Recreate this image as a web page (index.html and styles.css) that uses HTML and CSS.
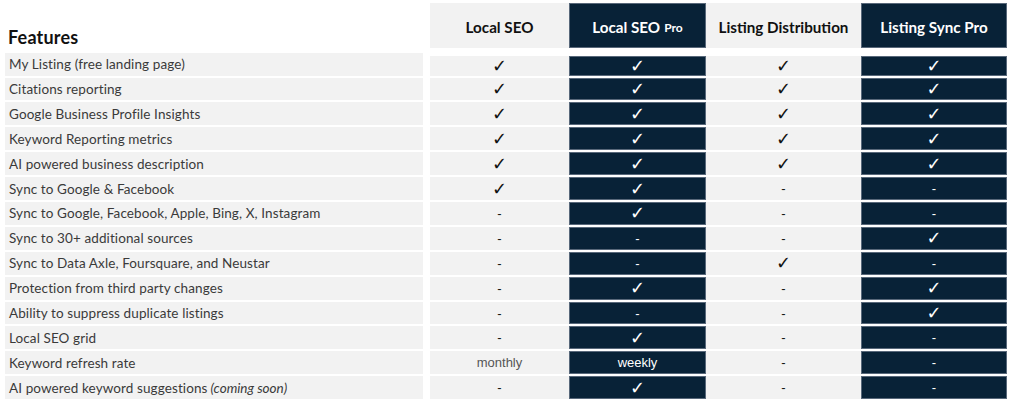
FILE: index.html
```html
<!DOCTYPE html>
<html lang="en">
<head>
<meta charset="utf-8">
<title>Features comparison</title>
<link rel="stylesheet" href="styles.css">
</head>
<body>
<div class="table">
  <div class="cell feat-head">Features</div>
  <div class="cell head light">Local SEO</div>
  <div class="cell head dark">Local SEO <small>Pro</small></div>
  <div class="cell head light">Listing Distribution</div>
  <div class="cell head dark">Listing Sync Pro</div>

  <div class="cell feat">My Listing (free landing page)</div>
  <div class="cell val light first"><span class="ck">✓</span></div>
  <div class="cell val dark first"><span class="ck">✓</span></div>
  <div class="cell val light first"><span class="ck">✓</span></div>
  <div class="cell val dark first"><span class="ck">✓</span></div>

  <div class="cell feat">Citations reporting</div>
  <div class="cell val light"><span class="ck">✓</span></div>
  <div class="cell val dark"><span class="ck">✓</span></div>
  <div class="cell val light"><span class="ck">✓</span></div>
  <div class="cell val dark"><span class="ck">✓</span></div>

  <div class="cell feat">Google Business Profile Insights</div>
  <div class="cell val light"><span class="ck">✓</span></div>
  <div class="cell val dark"><span class="ck">✓</span></div>
  <div class="cell val light"><span class="ck">✓</span></div>
  <div class="cell val dark"><span class="ck">✓</span></div>

  <div class="cell feat">Keyword Reporting metrics</div>
  <div class="cell val light"><span class="ck">✓</span></div>
  <div class="cell val dark"><span class="ck">✓</span></div>
  <div class="cell val light"><span class="ck">✓</span></div>
  <div class="cell val dark"><span class="ck">✓</span></div>

  <div class="cell feat">AI powered business description</div>
  <div class="cell val light"><span class="ck">✓</span></div>
  <div class="cell val dark"><span class="ck">✓</span></div>
  <div class="cell val light"><span class="ck">✓</span></div>
  <div class="cell val dark"><span class="ck">✓</span></div>

  <div class="cell feat">Sync to Google &amp; Facebook</div>
  <div class="cell val light"><span class="ck">✓</span></div>
  <div class="cell val dark"><span class="ck">✓</span></div>
  <div class="cell val light"><span class="dash">-</span></div>
  <div class="cell val dark"><span class="dash">-</span></div>

  <div class="cell feat">Sync to Google, Facebook, Apple, Bing, X, Instagram</div>
  <div class="cell val light"><span class="dash">-</span></div>
  <div class="cell val dark"><span class="ck">✓</span></div>
  <div class="cell val light"><span class="dash">-</span></div>
  <div class="cell val dark"><span class="dash">-</span></div>

  <div class="cell feat">Sync to 30+ additional sources</div>
  <div class="cell val light"><span class="dash">-</span></div>
  <div class="cell val dark"><span class="dash">-</span></div>
  <div class="cell val light"><span class="dash">-</span></div>
  <div class="cell val dark"><span class="ck">✓</span></div>

  <div class="cell feat">Sync to Data Axle, Foursquare, and Neustar</div>
  <div class="cell val light"><span class="dash">-</span></div>
  <div class="cell val dark"><span class="dash">-</span></div>
  <div class="cell val light"><span class="ck">✓</span></div>
  <div class="cell val dark"><span class="dash">-</span></div>

  <div class="cell feat">Protection from third party changes</div>
  <div class="cell val light"><span class="dash">-</span></div>
  <div class="cell val dark"><span class="ck">✓</span></div>
  <div class="cell val light"><span class="dash">-</span></div>
  <div class="cell val dark"><span class="ck">✓</span></div>

  <div class="cell feat">Ability to suppress duplicate listings</div>
  <div class="cell val light"><span class="dash">-</span></div>
  <div class="cell val dark"><span class="dash">-</span></div>
  <div class="cell val light"><span class="dash">-</span></div>
  <div class="cell val dark"><span class="ck">✓</span></div>

  <div class="cell feat">Local SEO grid</div>
  <div class="cell val light"><span class="dash">-</span></div>
  <div class="cell val dark"><span class="ck">✓</span></div>
  <div class="cell val light"><span class="dash">-</span></div>
  <div class="cell val dark"><span class="dash">-</span></div>

  <div class="cell feat">Keyword refresh rate</div>
  <div class="cell val light"><span class="txt">monthly</span></div>
  <div class="cell val dark"><span class="txt">weekly</span></div>
  <div class="cell val light"><span class="dash">-</span></div>
  <div class="cell val dark"><span class="dash">-</span></div>

  <div class="cell feat">AI powered keyword suggestions <em>(coming soon)</em></div>
  <div class="cell val light"><span class="dash">-</span></div>
  <div class="cell val dark"><span class="ck">✓</span></div>
  <div class="cell val light"><span class="dash">-</span></div>
  <div class="cell val dark"><span class="dash">-</span></div>
</div>
</body>
</html>
```

FILE: styles.css
```css
html, body {
  margin: 0;
  padding: 0;
  background: #ffffff;
}

body {
  padding: 3px 0 0 5px;
  font-family: "Lato", "Open Sans", sans-serif;
  color: #333333;
}

.table {
  display: grid;
  grid-template-columns: 425px 139px 137px 155px 146px;
  grid-template-rows: 47.7px repeat(14, 22.9px);
  row-gap: 2px;
}

.cell {
  display: flex;
  align-items: center;
  box-sizing: border-box;
  min-width: 0;
}

.feat-head {
  align-items: flex-end;
  font-size: 18px;
  letter-spacing: 0.2px;
  font-weight: 700;
  color: #111111;
  padding: 0 0 3px 3px;
}

.head {
  height: 45px;
  align-self: start;
  justify-content: center;
  font-size: 15.2px;
  font-weight: 700;
  padding-top: 3px;
  white-space: nowrap;
}

.head small {
  font-size: 12px;
  margin-left: 4px;
  font-weight: 700;
}

.feat {
  margin-right: 7px;
  background: #f2f2f2;
  font-size: 13.5px;
  letter-spacing: 0.1px;
  color: #3a3a3a;
  padding-left: 4px;
  white-space: nowrap;
}

.feat em {
  margin-left: 3px;
  letter-spacing: 0;
}

.val {
  justify-content: center;
}

.val.first {
  margin-top: 3px;
}

.light {
  background: #f2f2f2;
  color: #111111;
}

.dark {
  background: #082237;
  border: 1px solid #58687a;
  color: #ffffff;
}

.ck {
  font-family: "DejaVu Sans", sans-serif;
  font-size: 18px;
  font-weight: 700;
  line-height: 1;
}

.dash {
  font-family: "Liberation Sans", sans-serif;
  font-size: 13px;
  line-height: 1;
}

.txt {
  font-family: "Liberation Sans", sans-serif;
  font-size: 13px;
}

.light .txt {
  color: #555555;
}
```
